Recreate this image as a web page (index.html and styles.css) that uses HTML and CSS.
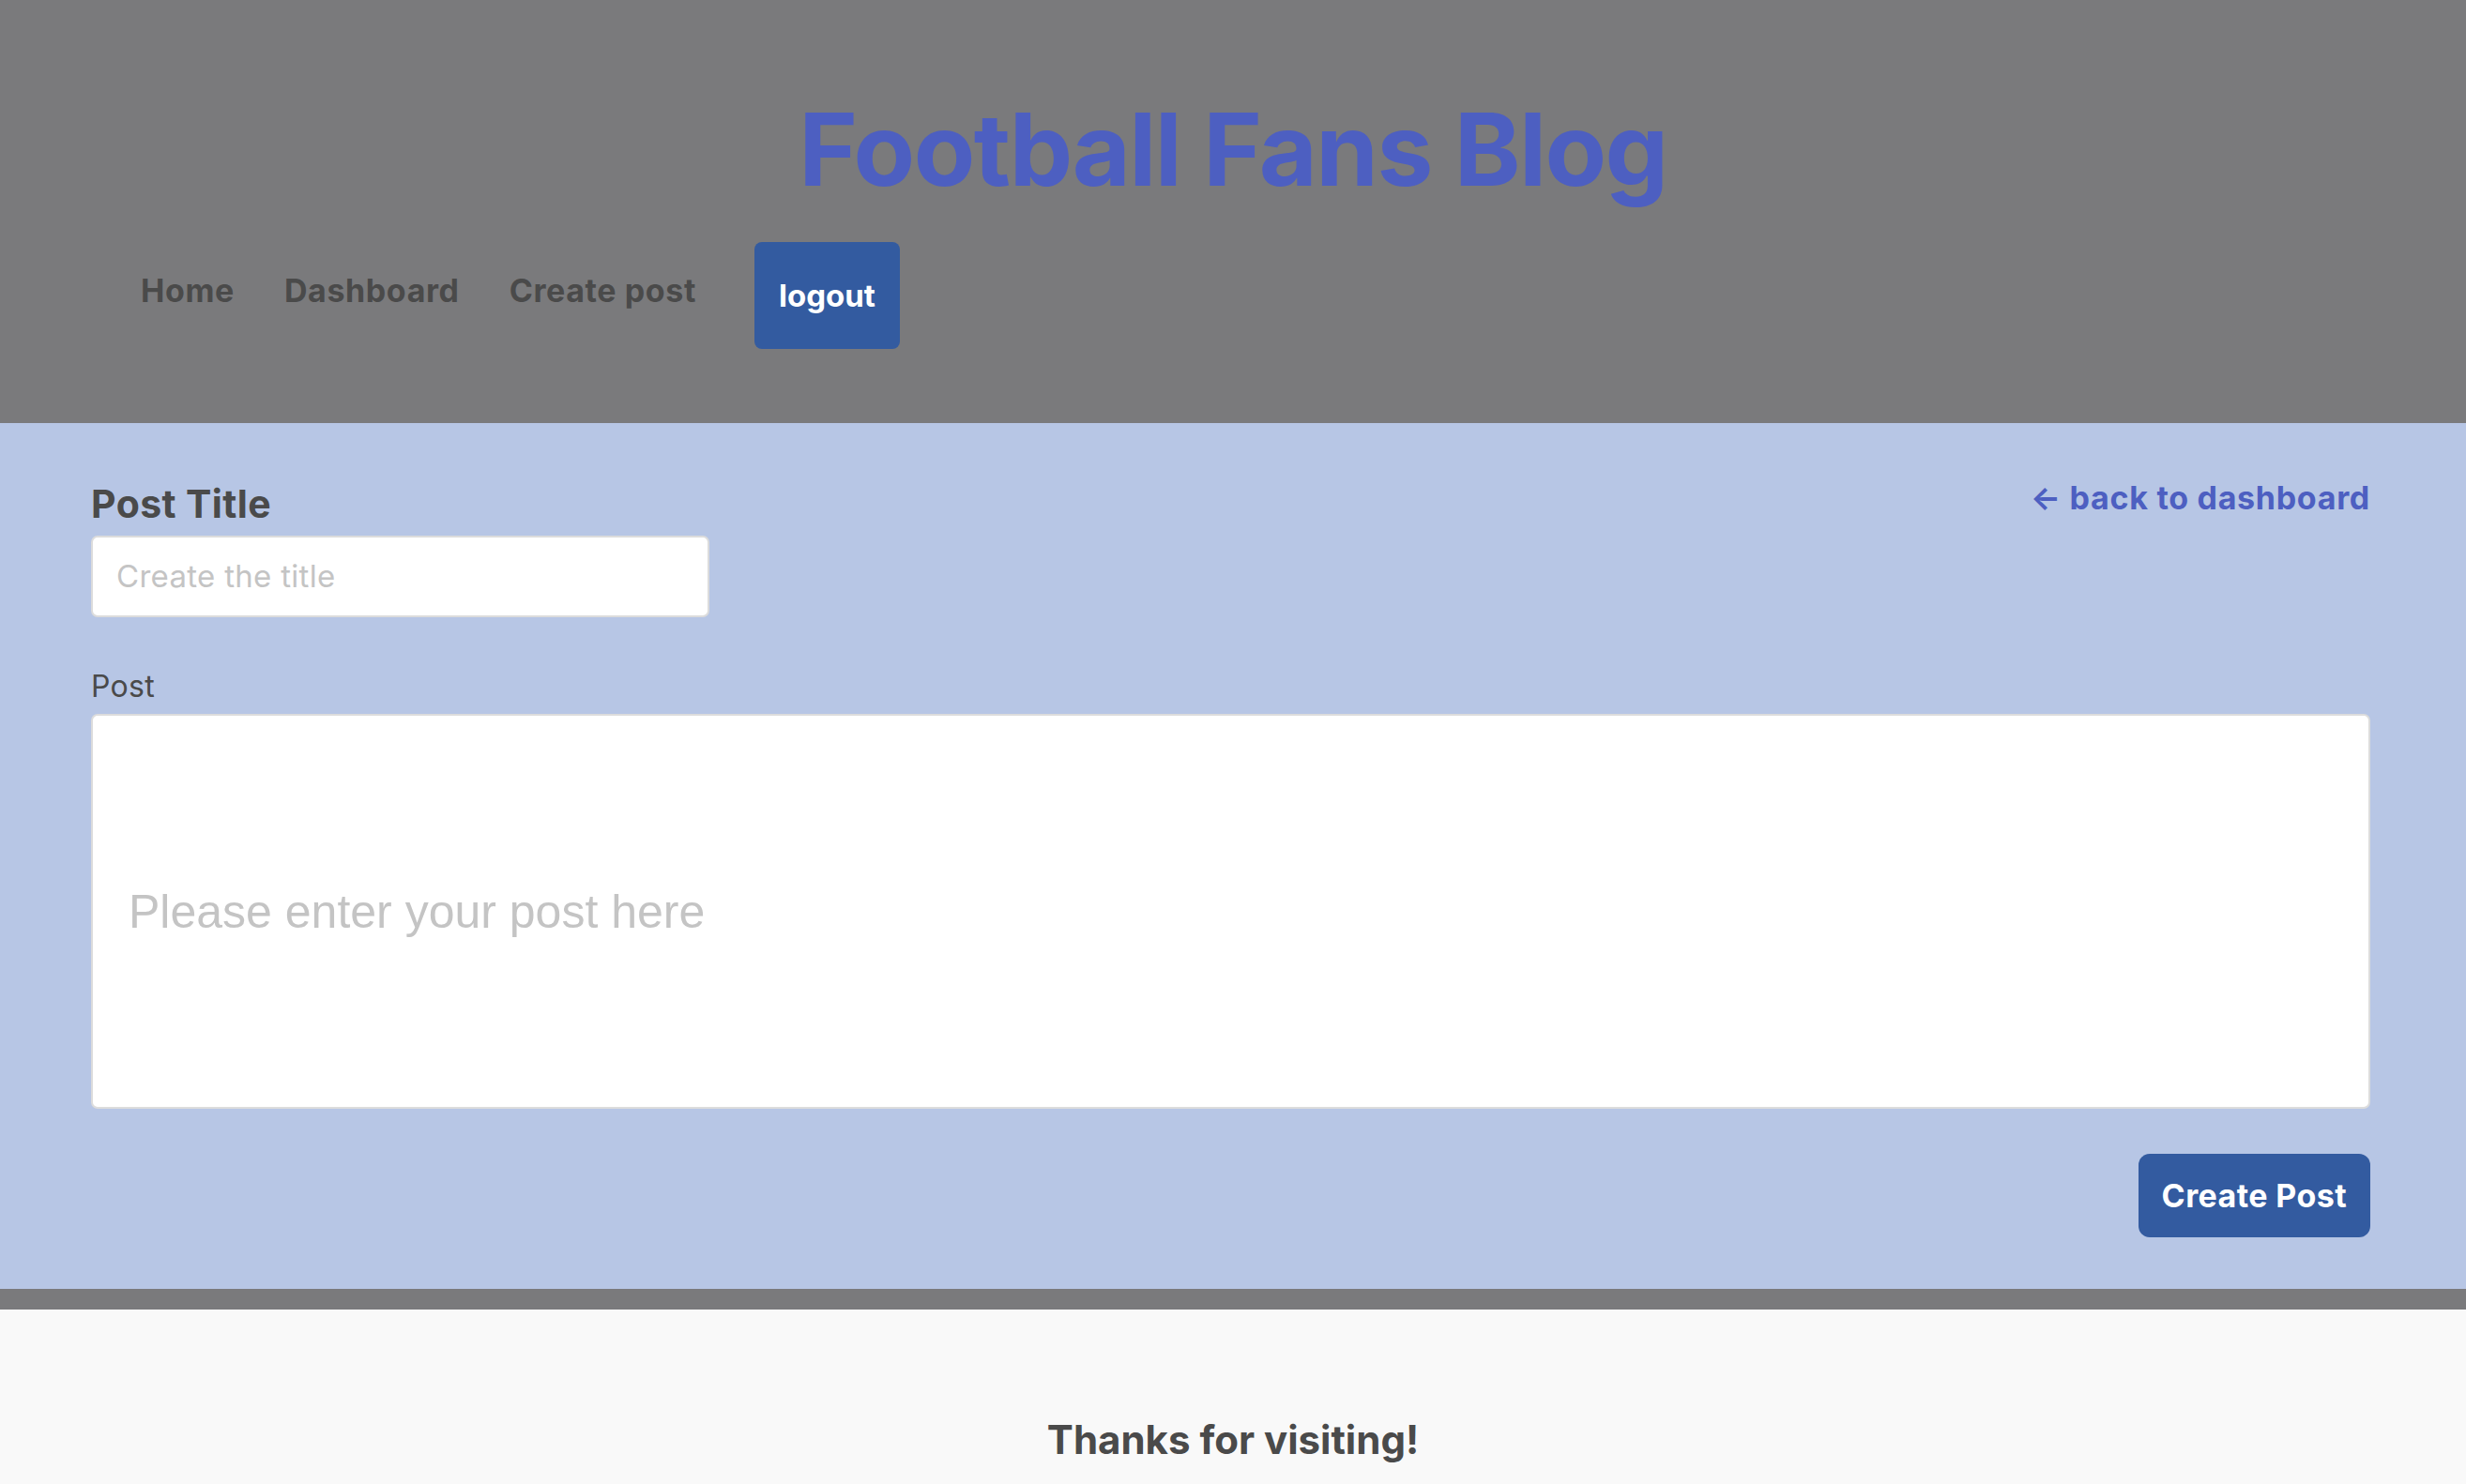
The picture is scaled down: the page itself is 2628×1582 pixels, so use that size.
FILE: index.html
```html
<!DOCTYPE html>
<html lang="en">
<head>
<meta charset="utf-8">
<title>Football Fans Blog</title>
<link rel="stylesheet" href="styles.css">
</head>
<body>
<header class="site-header">
  <h1 class="site-title">Football Fans Blog</h1>
  <nav class="nav">
    <a class="nav-link" href="#">Home</a>
    <a class="nav-link" href="#">Dashboard</a>
    <a class="nav-link" href="#">Create post</a>
    <button class="btn btn-logout" type="button">logout</button>
  </nav>
</header>
<main class="main">
  <form class="post-form">
    <div class="top-row">
      <div class="field-title">
        <label class="label-title" for="title">Post Title</label>
        <input class="input-title" id="title" type="text" placeholder="Create the title">
      </div>
      <a class="back-link" href="#"><span class="arrow">←</span> back to dashboard</a>
    </div>
    <label class="label-post" for="post">Post</label>
    <input class="input-post" id="post" type="text" placeholder="Please enter your post here">
    <div class="actions">
      <button class="btn btn-create" type="button">Create Post</button>
    </div>
  </form>
</main>
<div class="band"></div>
<footer class="footer">
  <h3 class="footer-text">Thanks for visiting!</h3>
</footer>
</body>
</html>
```

FILE: styles.css
```css
* { box-sizing: border-box; }
html, body {
  margin: 0;
  padding: 0;
}
body {
  font-family: Inter, "Noto Sans", sans-serif;
  color: #4a4a4a;
  background: #f9f9f9;
}
.site-header {
  background: #7a7a7c;
  height: 451px;
  padding-top: 95px;
}
.site-title {
  margin: 0;
  text-align: center;
  font-size: 107px;
  line-height: 1.2;
  font-weight: 700;
  color: #4d5fc1;
  letter-spacing: -1.5px;
}
.nav {
  display: flex;
  align-items: flex-start;
  margin-top: 35px;
  padding-left: 150px;
}
.nav-link {
  font-size: 34px;
  font-weight: 700;
  letter-spacing: 0.6px;
  color: #4a4a4a;
  text-decoration: none;
  margin-top: 31px;
  margin-right: 53px;
}
.nav-link:nth-child(3) { margin-right: 62px; }
.btn {
  font-family: Inter, "Noto Sans", sans-serif;
  font-weight: 700;
  color: #fff;
  background: #335ba0;
  border: none;
  cursor: pointer;
}
.btn-logout {
  font-size: 33px;
  height: 114px;
  padding: 0 26px;
  border-radius: 8px;
  line-height: 1;
}
.main {
  background: #b7c6e5;
  height: 923px;
  padding: 62px 102px 0 97px;
}
.top-row {
  display: flex;
  justify-content: space-between;
  align-items: flex-start;
}
.field-title {
  display: flex;
  flex-direction: column;
}
.label-title {
  font-size: 41px;
  font-weight: 700;
  letter-spacing: 0.4px;
  line-height: 1.21;
  color: #4a4a4a;
}
.input-title {
  margin-top: 8px;
  width: 659px;
  height: 87px;
  border: 2px solid #dcdcdc;
  border-radius: 7px;
  background: #fff;
  padding: 0 25px;
  font-family: Inter, "Noto Sans", sans-serif;
  font-size: 33px;
  letter-spacing: 0.3px;
  color: #363636;
  outline: none;
}
.input-title::placeholder { color: #c4c4c4; }
.back-link {
  font-size: 34px;
  font-weight: 700;
  letter-spacing: 0.7px;
  color: #4d5fc1;
  text-decoration: none;
  line-height: 1.21;
  margin-top: -3px;
}
.arrow {
  font-weight: 700;
}
.label-post {
  display: block;
  margin-top: 55px;
  font-size: 32px;
  font-weight: 400;
  letter-spacing: 0.3px;
  line-height: 1.21;
  color: #4a4a4a;
}
.input-post {
  display: block;
  margin-top: 10px;
  width: 100%;
  height: 421px;
  border: 2px solid #dcdcdc;
  border-radius: 7px;
  background: #fff;
  padding: 0 38px;
  font-family: "Liberation Sans", Arial, sans-serif;
  font-size: 50px;
  color: #363636;
  outline: none;
}
.input-post::placeholder { color: #c4c4c4; }
.actions {
  display: flex;
  justify-content: flex-end;
  margin-top: 48px;
}
.btn-create {
  font-size: 34px;
  letter-spacing: 0.4px;
  height: 89px;
  padding: 0 25px;
  border-radius: 12px;
  line-height: 1;
}
.band {
  height: 22px;
  background: #7a7a7c;
}
.footer {
  background: #f9f9f9;
  padding-top: 114px;
  padding-bottom: 40px;
  text-align: center;
}
.footer-text {
  margin: 0;
  font-size: 42px;
  font-weight: 700;
  line-height: 1.21;
  color: #4a4a4a;
}
```
